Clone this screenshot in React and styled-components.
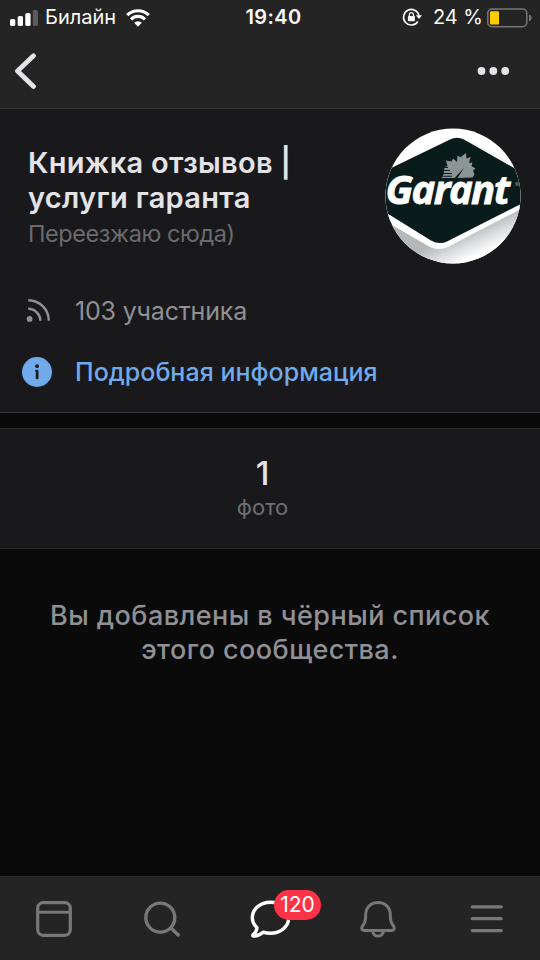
import styled, { createGlobalStyle } from "styled-components";

const GlobalStyle = createGlobalStyle`
  * {
    box-sizing: border-box;
  }
  body {
    margin: 0;
    background: #0a0a0a;
    font-family: Inter, "Liberation Sans", sans-serif;
  }
  svg {
    display: block;
    flex: none;
  }
`;

const Screen = styled.div`
  display: flex;
  flex-direction: column;
  width: 540px;
  height: 960px;
  overflow: hidden;
  background: #0a0a0a;
`;

const Header = styled.header`
  height: 109px;
  background: #242424;
  border-bottom: 1px solid #343536;
`;

const StatusBar = styled.div`
  display: grid;
  grid-template-columns: 1fr auto 1fr;
  align-items: center;
  height: 35px;
  padding: 0 8px 0 10px;
  color: #fafafa;
`;

const StatusGroup = styled.div`
  display: flex;
  align-items: center;
  justify-content: ${({ $end }) => ($end ? "flex-end" : "flex-start")};
`;

const StatusText = styled.span`
  font-size: 20px;
  line-height: 35px;
  font-weight: ${({ $bold }) => ($bold ? 600 : 400)};
  letter-spacing: ${({ $bold }) => ($bold ? "0.4px" : "0")};
  margin: ${({ $margin }) => $margin || "0"};
  white-space: nowrap;
`;

const NavBar = styled.nav`
  display: flex;
  align-items: center;
  justify-content: space-between;
  height: 72px;
  padding: 0 30px 0 14px;
`;

const IconButton = styled.button`
  display: flex;
  padding: 0;
  border: none;
  background: none;
  color: #e3e3e8;
`;

const InfoPanel = styled.section`
  height: 304px;
  background: #19191b;
  border-bottom: 1px solid #363638;
`;

const Profile = styled.div`
  display: flex;
  justify-content: space-between;
  height: 171px;
  padding: 19px 19px 0 28px;
`;

const ProfileText = styled.div`
  padding-top: 17px;
`;

const Title = styled.h1`
  width: 300px;
  margin: 0;
  color: #e3e3e8;
  font-size: 29px;
  font-weight: 600;
  line-height: 35px;
  letter-spacing: 0.3px;
`;

const Subtitle = styled.p`
  margin: 0;
  padding-top: 2px;
  color: #6b6b6e;
  font-size: 23.5px;
  line-height: 34px;
  letter-spacing: -0.42px;
`;

const InfoRow = styled.div`
  display: flex;
  align-items: center;
  height: 61px;
  padding-left: 22px;
  color: ${({ $accent }) => ($accent ? "#71aaeb" : "#909095")};
  font-size: 25px;
  font-weight: ${({ $accent }) => ($accent ? 500 : 400)};
  letter-spacing: ${({ $accent }) => ($accent ? "0.02px" : "-0.17px")};
`;

const RowIcon = styled.span`
  width: 53px;
`;

const Counters = styled.section`
  display: flex;
  flex-direction: column;
  align-items: center;
  height: 121px;
  margin-top: 15px;
  padding: 24px 15px 0 0;
  background: #19191b;
  border-top: 1px solid #29292b;
  border-bottom: 1px solid #29292b;
`;

const CounterValue = styled.div`
  color: #e3e3e8;
  font-size: 33px;
  font-weight: 500;
  line-height: 40px;
`;

const CounterLabel = styled.div`
  color: #6f6f73;
  font-size: 22px;
  line-height: 28px;
`;

const Notice = styled.p`
  flex: 1;
  margin: 0;
  padding-top: 50px;
  color: #909095;
  font-size: 27px;
  font-weight: 500;
  line-height: 34px;
  letter-spacing: 0.45px;
  text-align: center;
`;

const TabBar = styled.nav`
  display: grid;
  grid-template-columns: repeat(5, 108px);
  height: 84px;
  background: #242424;
  border-top: 1px solid #292929;
`;

const Tab = styled.div`
  position: relative;
  display: flex;
  align-items: center;
  justify-content: center;
  color: ${({ $active }) => ($active ? "#ffffff" : "#77787a")};
`;

const Badge = styled.span`
  position: absolute;
  top: 13px;
  left: 58px;
  width: 47px;
  height: 30px;
  border-radius: 15px;
  background: #ff3347;
  color: #fff;
  font-size: 21px;
  line-height: 30px;
  text-align: center;
`;

const SignalIcon = () => (
  <svg width="28" height="16" viewBox="0 0 28 16" fill="#fff">
    <rect x="0" y="9" width="5.3" height="7" rx="1.6" />
    <rect x="7.7" y="6" width="5.3" height="10" rx="1.6" />
    <rect x="15.3" y="3" width="5.3" height="13" rx="1.6" />
    <rect x="22.8" y="0" width="5.2" height="16" rx="1.6" fill="#5b5b5b" />
  </svg>
);

const WifiIcon = () => (
  <svg width="24" height="18" viewBox="0 0 24 18" fill="none" stroke="#fff" strokeWidth="3.1">
    <path d="M1.2 6.1a15.4 15.4 0 0 1 21.6 0" />
    <path d="M5 10.3a9.8 9.8 0 0 1 14 0" />
    <path d="M8.2 13.8a5.4 5.4 0 0 1 7.6 0L12 17.7z" fill="#fff" stroke="none" />
  </svg>
);

const RotationLockIcon = () => (
  <svg width="20" height="18" viewBox="0 0 20 18" fill="none" stroke="#fafafa" overflow="visible">
    <g transform="translate(1.5 -0.8)">
      <path d="M15.4 13.3A7.8 7.8 0 1 1 16.5 7.5" strokeWidth="1.6" />
      <path d="M13.3 7h6.2l-3 3.9z" fill="#fafafa" stroke="none" />
      <rect x="5.4" y="7.8" width="7" height="5.2" rx="0.7" fill="#fafafa" stroke="none" />
      <path d="M6.9 8V6.400a2 2 0 0 1 4 0V8" strokeWidth="1.3" />
    </g>
  </svg>
);

const BatteryIcon = () => (
  <svg width="45" height="20" viewBox="0 0 45 20" fill="none">
    <rect x="0.8" y="1" width="39" height="17.8" rx="4.2" stroke="#77777a" strokeWidth="1.5" />
    <rect x="3" y="3.2" width="9" height="13.4" rx="1.2" fill="#ffcc00" />
    <path d="M42 6.6c3.4 1 3.4 5.7 0 6.7z" fill="#77777a" />
  </svg>
);

const BackIcon = () => (
  <svg width="24" height="36" viewBox="0 0 24 36" fill="none">
    <path d="M19.5 2.8L3.5 18l16 15.4" stroke="currentColor" strokeWidth="4.8" strokeLinecap="round" strokeLinejoin="round" />
  </svg>
);

const MoreIcon = () => (
  <svg width="33" height="8" viewBox="0 0 33 8" fill="currentColor">
    <circle cx="4.5" cy="4" r="3.9" />
    <circle cx="16.3" cy="4" r="3.9" />
    <circle cx="28.2" cy="4" r="3.9" />
  </svg>
);

const FeedIcon = () => (
  <svg width="30" height="30" viewBox="0 0 30 30" fill="none" stroke="currentColor" strokeWidth="2.5" strokeLinecap="round">
    <circle cx="7.600" cy="22.900" r="2.900" fill="currentColor" stroke="none" />
    <path d="M6.200 4.200a20.600 20.600 0 0 1 20.600 20.600" strokeLinecap="butt" />
    <path d="M6.200 12.800a12.200 12.200 0 0 1 12.200 12" strokeLinecap="butt" />
  </svg>
);

const InfoIcon = () => (
  <svg width="30" height="30" viewBox="0 0 30 30">
    <circle cx="15" cy="15" r="15" fill="currentColor" />
    <circle cx="15.1" cy="9.2" r="1.9" fill="#19191b" />
    <path d="M14.6 14h0.500v7" fill="none" stroke="#19191b" strokeWidth="2.700" strokeLinecap="round" strokeLinejoin="round" />
  </svg>
);

const Avatar = () => (
  <svg width="136" height="136" viewBox="0 0 136 136">
    <defs>
      <clipPath id="avatarCircle">
        <circle cx="68" cy="68" r="67.5" />
      </clipPath>
      <linearGradient id="avatarShade" gradientUnits="userSpaceOnUse" x1="80" y1="103" x2="91" y2="128">
        <stop offset="0" stopColor="#b4b8bb" />
        <stop offset="1" stopColor="#ffffff" />
      </linearGradient>
    </defs>
    <g clipPath="url(#avatarCircle)">
      <rect width="136" height="136" fill="#fff" />
      <path d="M0 93l45 26q9 4 18 0L136 79v57H0z" fill="url(#avatarShade)" />
      <path d="M0 43L66 10.5Q72 7.5 79 11L136 46v35L64 118q-10 5-20-1L0 90z" fill="#fff" />
      <path d="M0 43L65 11.500Q72 8 79 11.500L136 44v32L62 113.500q-8 3.500-16-1L0 84z" fill="#091b1b" />
      <path d="M88 15L131 39" stroke="#ebebeb" strokeWidth="1" />
      <path
        d="M72.500 50L79 40l-9.500 10H56.500l2-3.500 1-7.500 3-1-1.500-5.500 5.500 1 1.500-3 4 3.500.500-6.500 3 1.800 5.500-4.300.500 5.500 4-1.500-1.500 6 3.500-.500-1 3.500 4 2.500-2.500 2 1.500 4-2 3z"
        fill="#8c9496"
      />
      <path d="M55 39.500h8M55 42.500h10M55 45.500h12M55 48.300h12" stroke="#091b1b" strokeWidth="1.100" />
    </g>
    <text x="0.5" y="76" fill="#fff" stroke="#fff" strokeWidth="0.8" fontFamily="Open Sans, Noto Sans, sans-serif" fontSize="40" fontWeight="700" fontStyle="italic" letterSpacing="-1.6">Garant</text>
    <text x="130" y="58.5" fill="#879090" fontFamily="Inter, sans-serif" fontSize="6">®</text>
  </svg>
);

const HomeIcon = () => (
  <svg width="36" height="36" viewBox="0 0 36 36" fill="none" stroke="currentColor" strokeWidth="3.2">
    <rect x="1.7" y="1.7" width="32.6" height="32.6" rx="5.5" />
    <path d="M2 11.2h32" strokeWidth="2.9" />
  </svg>
);

const SearchIcon = () => (
  <svg width="36" height="36" viewBox="0 0 36 36" fill="none" stroke="currentColor" strokeWidth="3.4" strokeLinecap="round">
    <circle cx="16.3" cy="16.6" r="14.5" />
    <path d="M27 27l7.2 7" />
  </svg>
);

const MessagesIcon = () => (
  <svg width="40" height="38" viewBox="0 0 40 38" fill="none" stroke="currentColor" strokeWidth="3.4" strokeLinejoin="round">
    <path d="M20.500 2.200C10.500 2.200 2.300 9 2.300 17.500c0 4.300 1.700 7.500 4.700 10.200-.2 3.200-1.800 5.400-4 7.200-.6.600-.2 1.200.6 1.200 4.100-.2 6.900-1.500 9.500-3.900 2.300.7 4.700 1.100 7.400 1.100 10.300 0 18.200-6.800 18.200-15.800S30.500 2.200 20.500 2.200z" />
  </svg>
);

const BellIcon = () => (
  <svg width="36" height="38" viewBox="0 0 36 38" fill="none" stroke="currentColor" strokeWidth="3" strokeLinejoin="round">
    <path d="M18 2.500C10.500 2.500 5.700 7.800 5.700 15c0 5.500-.5 7.600-2.700 10.300C1.300 27.400 1.100 30.500 4.600 30.500h26.800c3.500 0 3.300-3.100 1.600-5.200-2.200-2.700-2.700-4.800-2.700-10.300 0-7.200-4.800-12.500-12.300-12.500z" />
    <path d="M12.700 31.500c.6 3 2.500 4.600 5.300 4.600s4.700-1.600 5.300-4.600" />
  </svg>
);

const MenuIcon = () => (
  <svg width="34" height="30" viewBox="0 0 34 30" fill="none" stroke="currentColor" strokeWidth="3.2" strokeLinecap="round">
    <path d="M3.3 2.8h29M3.3 14.7h29M3.3 26.6h29" />
  </svg>
);

const App = () => (
  <>
    <GlobalStyle />
    <Screen>
      <Header>
        <StatusBar>
          <StatusGroup>
            <SignalIcon />
            <StatusText $margin="0 10px 0 7px">Билайн</StatusText>
            <WifiIcon />
          </StatusGroup>
          <StatusText $bold $margin="0 0 0 5px">19:40</StatusText>
          <StatusGroup $end>
            <RotationLockIcon />
            <StatusText $margin="0 4px 0 12px">24 %</StatusText>
            <BatteryIcon />
          </StatusGroup>
        </StatusBar>
        <NavBar>
          <IconButton aria-label="Назад">
            <BackIcon />
          </IconButton>
          <IconButton aria-label="Ещё">
            <MoreIcon />
          </IconButton>
        </NavBar>
      </Header>

      <InfoPanel>
        <Profile>
          <ProfileText>
            <Title>Книжка отзывов | услуги гаранта</Title>
            <Subtitle>Переезжаю сюда)</Subtitle>
          </ProfileText>
          <Avatar />
        </Profile>
        <InfoRow>
          <RowIcon>
            <FeedIcon />
          </RowIcon>
          103 участника
        </InfoRow>
        <InfoRow $accent>
          <RowIcon>
            <InfoIcon />
          </RowIcon>
          Подробная информация
        </InfoRow>
      </InfoPanel>

      <Counters>
        <CounterValue>1</CounterValue>
        <CounterLabel>фото</CounterLabel>
      </Counters>

      <Notice>
        Вы добавлены в чёрный список
        <br />
        этого сообщества.
      </Notice>

      <TabBar>
        <Tab>
          <HomeIcon />
        </Tab>
        <Tab>
          <SearchIcon />
        </Tab>
        <Tab $active>
          <MessagesIcon />
          <Badge>120</Badge>
        </Tab>
        <Tab>
          <BellIcon />
        </Tab>
        <Tab>
          <MenuIcon />
        </Tab>
      </TabBar>
    </Screen>
  </>
);

export default App;
